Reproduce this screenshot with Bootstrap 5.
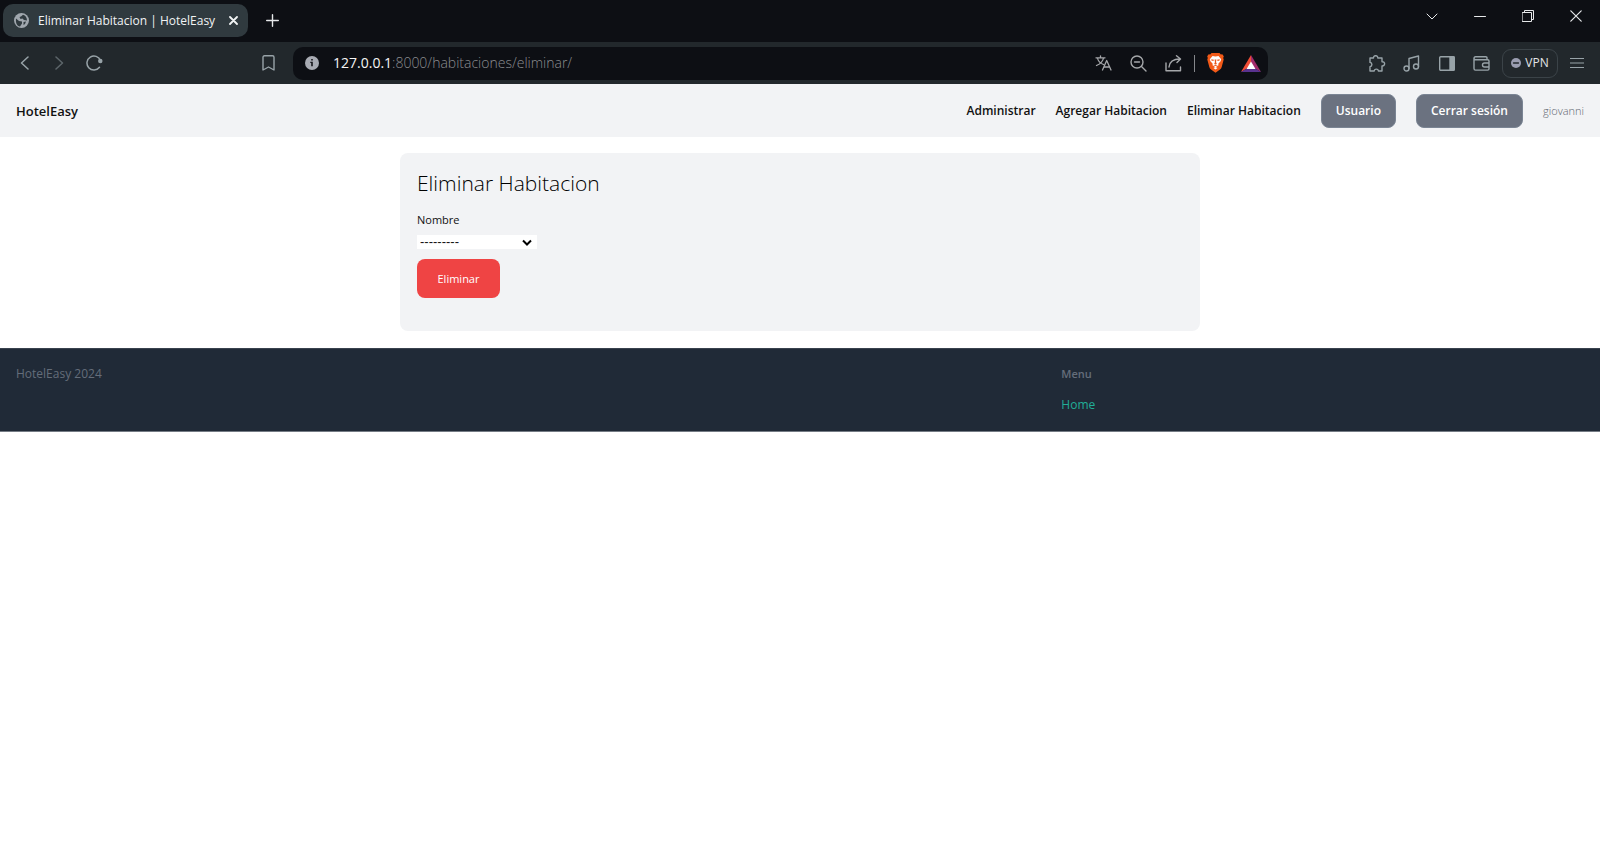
<!DOCTYPE html>
<html lang="es" data-bs-theme="light">
<head>
<meta charset="utf-8">
<meta name="viewport" content="width=device-width, initial-scale=1">
<title>Eliminar Habitacion | HotelEasy</title>
<link rel="stylesheet" href="https://cdn.jsdelivr.net/npm/bootstrap@5.3.0/dist/css/bootstrap.min.css">
<style>
  body { font-family: "Open Sans", "Noto Sans", sans-serif; font-size: 12px; line-height: 16px; color: #111; background: #fff; }
  svg { display: block; fill: none; stroke: currentColor; stroke-linecap: round; stroke-linejoin: round; }
  svg.solid { stroke: none; }

  /* Browser window */
  .tab-strip { height: 42px; background: #0d0f14; color: #e6e8ea; }
  .browser-tab { width: 245px; height: 33px; margin: 4px 0 0 3px; padding: 0 7px 0 11px; border-radius: 10px; background: #303a3f; color: #f1f3f4; gap: 9px; }
  .icon-btn { width: 35px; height: 34px; padding: 0; border: 0; background: none; color: inherit; display: flex; align-items: center; justify-content: center; flex: none; }
  .close-tab { width: 16px; }
  .window-btn { width: 48px; height: 32px; }
  .toolbar { height: 42px; background: #22282c; color: #98a3a8; }
  .history-group { width: 293px; padding: 0 7px; }
  .address { height: 33px; border-radius: 10px; background: #0d0f14; color: #a5a7aa; }
  .url { font-size: 14px; font-weight: 300; color: #8b8d90; margin-left: 14px; }
  .url b { font-weight: 400; color: #f5f5f5; }
  .divider { width: 1px; height: 17px; margin: 0 3px; background: #85878b; }
  .tool-group { padding: 0 6px 0 91px; }
  .vpn { width: 56px; height: 29px; margin: 0 1px 0 3px; padding: 0; border: 1px solid #3b4348; border-radius: 9px; background: none; color: #e3e5e7; gap: 4px; }

  /* Page */
  .site-nav { height: 53px; padding: 0 16px; background: #f2f3f5; }
  .site-nav a { color: #111; text-decoration: none; }
  .brand { font-size: 13px; font-weight: 600; }
  .nav-items { gap: 20px; font-size: 12px; font-weight: 600; }
  .nav-items .pill { height: 34px; padding: 0 14px; border: 1px solid #7b8594; border-radius: 8px; background: #6b7280; color: #fff; font-size: 12px; font-weight: 600; }
  .user { font-size: 11px; font-weight: 300; color: #5f6671; }
  .panel { width: 50%; margin: 16px auto 17px; padding: 17px 17px 33px; border-radius: 8px; background: #f2f3f5; }
  .panel h1 { font-size: 21px; line-height: 27px; font-weight: 300; color: #000; margin: 0 0 15px; }
  .panel label { font-size: 11px; line-height: 16px; margin-bottom: 7px; }
  .panel select { width: 120px; height: 14px; padding: 0 3px; border: 0; border-radius: 0; appearance: none; color: #111; font: 13px/14px "Liberation Sans", sans-serif;
    background: #fff url("data:image/svg+xml,%3Csvg xmlns='http://www.w3.org/2000/svg' width='10' height='7'%3E%3Cpath d='M1 1.5l4 4 4-4' fill='none' stroke='%23000' stroke-width='2'/%3E%3C/svg%3E") no-repeat right 5px center; }
  .danger { width: 83px; height: 39px; margin-top: 10px; border: 0; border-radius: 8px; background: #ef4444; color: #fff; font-size: 11px; }
  .site-footer { padding: 17px 16px 18px; background: #202a37; border-top: 1px solid #39424e; border-bottom: 1px solid #747b84; color: #646d7a; }
  .menu-col h2 { font-size: 11px; line-height: 16px; font-weight: 600; margin: 0 0 15px; }
  .menu-col a { color: #21ae98; text-decoration: none; }
</style>
<script src="https://cdn.jsdelivr.net/npm/bootstrap@5.3.0/dist/js/bootstrap.bundle.min.js"></script>
</head>
<body>
<div class="tab-strip d-flex">
  <div class="browser-tab d-flex align-items-center">
    <svg class="solid" width="15" height="15" viewBox="0 0 15 15"><circle cx="7.500" cy="7.500" r="7.500" fill="#a0a7ae"/><path d="M2 5.500l3 2.500 3 .5v2L6 13.500C3 13 1.500 10 2 5.500zM9 1.800L7 3.500 5.500 4l1 2 2-.5 1.500 1.500 3 .5C13 4.500 11.500 2.500 9 1.800zM9.500 9l2.500-.5-1 2.500-1.500 1z" fill="#303a3f"/></svg>
    <span class="flex-grow-1">Eliminar Habitacion | HotelEasy</span>
    <button class="icon-btn close-tab" type="button" aria-label="Cerrar pestaña"><svg width="9" height="9" viewBox="0 0 9 9" stroke-width="1.800"><path d="M1 1l7 7M8 1L1 8"/></svg></button>
  </div>
  <button class="icon-btn window-btn mt-1" type="button" aria-label="Nueva pestaña"><svg width="13" height="13" viewBox="0 0 13 13" stroke-width="1.400"><path d="M6.500.7v11.600M.7 6.500h11.600"/></svg></button>
  <div class="d-flex ms-auto">
    <button class="icon-btn window-btn" type="button" aria-label="Buscar pestañas"><svg width="12" height="7" viewBox="0 0 12 7" stroke-width="1"><path d="M1 1l5 5 5-5"/></svg></button>
    <button class="icon-btn window-btn" type="button" aria-label="Minimizar"><svg width="12" height="3" viewBox="0 0 12 3"><path d="M.5 1.500h11"/></svg></button>
    <button class="icon-btn window-btn" type="button" aria-label="Restaurar"><svg width="12" height="12" viewBox="0 0 12 12"><path d="M.5 2.500h9v9h-9zM2.500 2V.5h9v9H10"/></svg></button>
    <button class="icon-btn window-btn" type="button" aria-label="Cerrar"><svg width="12" height="12" viewBox="0 0 12 12" stroke-width="1.200"><path d="M.8.8l10.400 10.400M11.200.8L.8 11.200"/></svg></button>
  </div>
</div>

<div class="toolbar d-flex align-items-center">
  <div class="history-group d-flex">
    <button class="icon-btn" type="button" aria-label="Atrás"><svg width="9" height="14" viewBox="0 0 9 14" stroke-width="1.500"><path d="M8 1L1.500 7 8 13"/></svg></button>
    <button class="icon-btn opacity-50" type="button" aria-label="Adelante"><svg width="9" height="14" viewBox="0 0 9 14" stroke-width="1.500"><path d="M1 1l6.500 6L1 13"/></svg></button>
    <button class="icon-btn" type="button" aria-label="Recargar"><svg width="17" height="16" viewBox="0 0 17 16" stroke-width="1.500"><path d="M14.500 5.500A7 7 0 1 0 13.500 12.300"/><circle cx="14.300" cy="6" r="1.500" fill="currentColor"/></svg></button>
    <button class="icon-btn ms-auto" type="button" aria-label="Marcador"><svg width="13" height="16" viewBox="0 0 13 16" stroke-width="1.400"><path d="M2.500.8h8q1.500 0 1.500 1.500v12.700l-5.500-3L1 15V2.300Q1 .8 2.500.8z"/></svg></button>
  </div>
  <div class="address d-flex align-items-center flex-grow-1 ps-2">
    <svg class="solid ms-1" width="14" height="14" viewBox="0 0 14 14"><circle cx="7" cy="7" r="7" fill="#a8abb3"/><path d="M6.200 3h1.600v1.500H6.200zM5.300 5.800h2.500v4.500h-1.600V7h-.9z" fill="#14161b"/></svg>
    <span class="url flex-grow-1"><b>127.0.0.1</b>:8000/habitaciones/eliminar/</span>
    <button class="icon-btn" type="button" aria-label="Traducir"><svg width="17" height="16" viewBox="0 0 17 16" stroke-width="1.300"><path d="M1 2.800h9M5.500.8v2M2.500 3c.5 3 3.500 5.500 6 6.500M8.500 3c-.5 3-3.500 6-7 7.500M7.500 15L11.700 5.500 16 15M9 12h5.500"/></svg></button>
    <button class="icon-btn" type="button" aria-label="Reducir zoom"><svg width="17" height="17" viewBox="0 0 17 17" stroke-width="1.400"><circle cx="7" cy="7" r="6"/><path d="M4.500 7h5M11.500 11.500L16 16"/></svg></button>
    <button class="icon-btn" type="button" aria-label="Compartir"><svg width="17" height="17" viewBox="0 0 17 17" stroke-width="1.400"><path d="M1 8v7.800h14.500V12M4 12c.5-5 4-8 11-8M11.500.8L15.500 4l-3.500 3.500"/></svg></button>
    <span class="divider"></span>
    <button class="icon-btn" type="button" aria-label="Brave Shields"><svg class="solid" width="17" height="20" viewBox="0 0 17 20"><path d="M4.500 0h8l1.300 1.500 1.500-.2 1.500 2-.6 1.700.5 1.500-2 7.500q-.4 1.500-1.700 2.500L8.500 19.800 4 16.500Q2.700 15.500 2.300 14L.3 6.500.8 5 .2 3.300l1.500-2 1.500.2z" fill="#f35a18"/><path d="M5.500 3l3 .5 3-.5 2.700 3.200-.6 2-2.300 2.600.2 1.500-3 2-3-2 .2-1.500-2.300-2.600-.6-2z" fill="#fff"/><path d="M4.300 6.200l2.600.6-.5 1.300-2-.7zM12.700 6.200l-2.600.6.5 1.300 2-.7zM7.600 6.500h1.800l-.4 3 1.200.8-1.700 1-1.700-1 1.200-.8zM6.200 12.200l2.300-.7 2.300.7-2.300.8z" fill="#e9571c"/><path d="M6.500 15l2-1 2 1-2 1.600z" fill="#fff"/></svg></button>
    <button class="icon-btn" type="button" aria-label="Brave Rewards"><svg class="solid" width="20" height="17" viewBox="0 0 20 17"><path d="M10 0L0 17l10-6z" fill="#f04d36"/><path d="M10 0l10 17-10-6z" fill="#a22b6c"/><path d="M0 17l10-6 10 6z" fill="#59328f"/><path d="M10 6.500L14.500 14h-9z" fill="#fff"/></svg></button>
  </div>
  <div class="tool-group d-flex align-items-center">
    <button class="icon-btn" type="button" aria-label="Extensiones"><svg width="18" height="17" viewBox="0 0 18 17" stroke-width="1.400"><path d="M2 3h3.500C5.300-.1 10-.1 9.800 3H14v3.700c3.500-.2 3.500 4.500 0 4.300V16h-3.600c-.1-2.500-4-2.500-4.200 0H2v-4.300c2.500-.3 2.500-4 0-4.300z"/></svg></button>
    <button class="icon-btn" type="button" aria-label="Multimedia"><svg width="17" height="17" viewBox="0 0 17 17" stroke-width="1.400"><circle cx="3.500" cy="13.500" r="2.500"/><circle cx="13" cy="11.500" r="2.500"/><path d="M6 13.500V3.500L15.500 1v10.500"/></svg></button>
    <button class="icon-btn" type="button" aria-label="Barra lateral"><svg width="16" height="15" viewBox="0 0 16 15" stroke-width="1.400"><rect x=".7" y=".7" width="14.600" height="13.600" rx="1"/><path d="M11 1h4v13h-4z" fill="currentColor"/></svg></button>
    <button class="icon-btn" type="button" aria-label="Cartera"><svg width="17" height="15" viewBox="0 0 17 15" stroke-width="1.400"><path d="M14 3.800V2Q14 .8 12.800.8H2.500Q1 .8 1 2.300t1.500 1.500H14.700q1.300 0 1.300 1.300v7.700q0 1.300-1.300 1.300H2.500Q1 14 1 12.500V2.300M16 7h-4.500q-2 0-2 2t2 2H16z"/></svg></button>
    <button class="vpn d-flex align-items-center justify-content-center" type="button"><svg width="10" height="10" viewBox="0 0 10 10" stroke-width="1.300"><circle cx="5" cy="5" r="5" fill="#9a9db0" stroke="none"/><path d="M2.500 5h5" stroke="#22282c"/></svg>VPN</button>
    <button class="icon-btn" type="button" aria-label="Menú"><svg width="14" height="12" viewBox="0 0 14 12" stroke-width="1.200"><path d="M.5 1.500h13M.5 6h13M.5 10.500h13"/></svg></button>
  </div>
</div>

<nav class="site-nav d-flex align-items-center justify-content-between">
  <a class="brand" href="#">HotelEasy</a>
  <div class="nav-items d-flex align-items-center">
    <a href="#">Administrar</a>
    <a href="#">Agregar Habitacion</a>
    <a href="#">Eliminar Habitacion</a>
    <button class="pill" type="button">Usuario</button>
    <button class="pill" type="button">Cerrar sesión</button>
    <span class="user">giovanni</span>
  </div>
</nav>

<main class="panel">
  <h1>Eliminar Habitacion</h1>
  <form>
    <label class="d-block" for="nombre">Nombre</label>
    <select class="d-block" id="nombre"><option>---------</option></select>
    <button class="danger d-block" type="button">Eliminar</button>
  </form>
</main>

<footer class="site-footer">
  <div class="row g-0">
    <div class="col-8">HotelEasy 2024</div>
    <div class="menu-col col-4">
      <h2>Menu</h2>
      <a href="#">Home</a>
    </div>
  </div>
</footer>
</body>
</html>
